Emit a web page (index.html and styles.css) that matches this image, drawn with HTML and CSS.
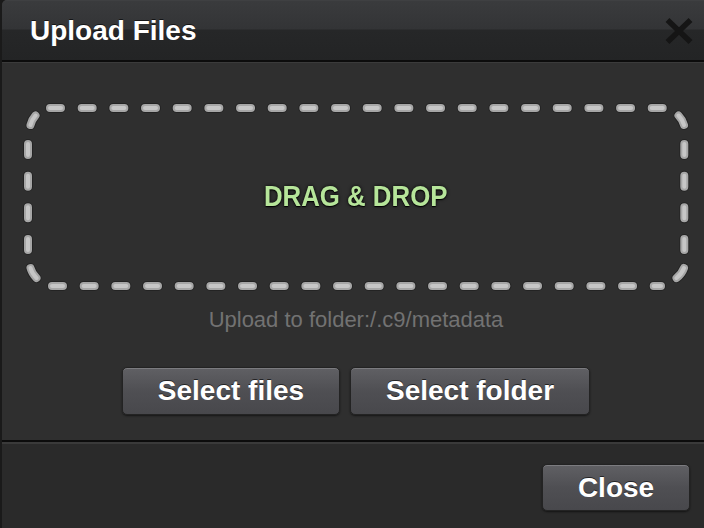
FILE: index.html
```html
<!DOCTYPE html>
<html>
<head>
<meta charset="utf-8">
<link rel="stylesheet" href="styles.css">
</head>
<body>
<div class="dialog">
  <div class="header">
    <div class="title">Upload Files</div>
    <svg class="close-x" width="28" height="28" viewBox="0 0 28 28">
      <path d="M2.5 3 L25.5 25 M25.5 3 L2.5 25" stroke="#151515" stroke-width="5.5" stroke-linecap="butt"/>
    </svg>
  </div>
  <div class="body">
    <div class="dropzone">
      <svg class="dash" width="670" height="190" viewBox="21 101 670 190">
        <g class="dash-shadow">
          <path d="M50 108 H663 M52 286 H661 M28 144 V251 M684.3 144 V251" stroke-dasharray="11 20.67"/>
          <path d="M30.5 125 A22 22 0 0 1 35.5 115.5 M678.5 115.5 A22 22 0 0 1 684 125 M30.5 268 A22 22 0 0 0 36.5 278 M684 268 A22 22 0 0 1 676.5 278"/>
        </g>
        <g class="dash-base">
          <path d="M50 108 H663 M52 286 H661 M28 144 V251 M684.3 144 V251" stroke-dasharray="11 20.67"/>
          <path d="M30.5 125 A22 22 0 0 1 35.5 115.5 M678.5 115.5 A22 22 0 0 1 684 125 M30.5 268 A22 22 0 0 0 36.5 278 M684 268 A22 22 0 0 1 676.5 278"/>
        </g>
        <g class="dash-hi">
          <path d="M50 108 H663 M52 286 H661 M28 144 V251 M684.3 144 V251" stroke-dasharray="11 20.67"/>
          <path d="M30.5 125 A22 22 0 0 1 35.5 115.5 M678.5 115.5 A22 22 0 0 1 684 125 M30.5 268 A22 22 0 0 0 36.5 278 M684 268 A22 22 0 0 1 676.5 278"/>
        </g>
      </svg>
      <span class="drag">DRAG &amp; DROP</span>
    </div>
    <div class="target">Upload to folder:/.c9/metadata</div>
    <div class="actions">
      <button class="btn btn-files">Select files</button>
      <button class="btn btn-folder">Select folder</button>
    </div>
  </div>
  <div class="footer">
    <button class="btn btn-close">Close</button>
  </div>
</div>
</body>
</html>
```
FILE: styles.css
```css
html, body {
  margin: 0;
  padding: 0;
  background: #1a1a1a;
  overflow: hidden;
  width: 704px;
  height: 528px;
}
.dialog {
  margin-left: 2px;
  width: 702px;
  height: 528px;
  display: flex;
  flex-direction: column;
  border-top-left-radius: 5px;
  overflow: hidden;
  font-family: "Liberation Sans", Arial, sans-serif;
  background: #2f2f2f;
}
.header {
  height: 60px;
  flex: none;
  display: flex;
  align-items: center;
  justify-content: space-between;
  padding: 0 11px 0 28px;
  background: linear-gradient(#444547 0, #3a3b3d 1px, #333436 29px, #262728 30px, #232425 60px);
  border-bottom: 2px solid #0c0c0c;
}
.title {
  color: #fff;
  font-size: 28px;
  font-weight: bold;
  padding-top: 2px;
  text-shadow: 0 -1px 0 rgba(0,0,0,0.6);
}
.close-x {
  margin-top: 2px;
  filter: blur(0.4px);
}
.body {
  flex: none;
  height: 378px;
  box-sizing: border-box;
  border-top: 1px solid #3b3b3b;
  background: #2f2f2f;
  padding-top: 38px;
  padding-left: 6px;
  display: flex;
  flex-direction: column;
  align-items: center;
}
.dropzone {
  position: relative;
  width: 670px;
  height: 190px;
  display: flex;
  align-items: center;
  justify-content: center;
  align-self: flex-start;
  margin-left: 13px;
}
.dash {
  position: absolute;
  left: 0;
  top: 0;
}
.dash path {
  fill: none;
  stroke-linecap: round;
}
.dash-shadow path {
  stroke: #1c1c1c;
  stroke-width: 10;
  opacity: 0.6;
}
.dash-base path {
  stroke: #a6a6a6;
  stroke-width: 8;
}
.dash-hi path {
  stroke: #c6c6c6;
  stroke-width: 4;
}
.drag {
  position: relative;
  display: inline-block;
  color: #b6e59a;
  font-size: 30px;
  font-weight: bold;
  transform: scaleX(0.86);
  text-shadow: 0 0 4px rgba(0,0,0,0.9), 0 1px 1px #000;
}
.target {
  margin-top: 17px;
  font-size: 22px;
  line-height: 24px;
  color: #727272;
}
.actions {
  margin-top: 35px;
  display: flex;
  gap: 10px;
}
.btn {
  height: 48px;
  padding: 0;
  font-family: "Liberation Sans", Arial, sans-serif;
  font-size: 28px;
  font-weight: bold;
  color: #fff;
  border: 1px solid #232323;
  border-radius: 5px;
  background: linear-gradient(#606064, #4f4f53 50%, #48484c);
  box-shadow: inset 0 1px 0 rgba(255,255,255,0.18), 0 1px 2px rgba(0,0,0,0.55);
  text-shadow: 0 -1px 0 rgba(0,0,0,0.6);
  cursor: pointer;
}
.btn-files { width: 218px; }
.btn-folder { width: 240px; }
.footer {
  flex: 1;
  border-top: 2px solid #0c0c0c;
  box-shadow: inset 0 2px 0 #3a3a3a;
  background: #2a2a2a;
  display: flex;
  justify-content: flex-end;
  align-items: flex-start;
  padding: 22px 14px 0 0;
}
.btn-close {
  width: 148px;
  height: 47px;
}
```
